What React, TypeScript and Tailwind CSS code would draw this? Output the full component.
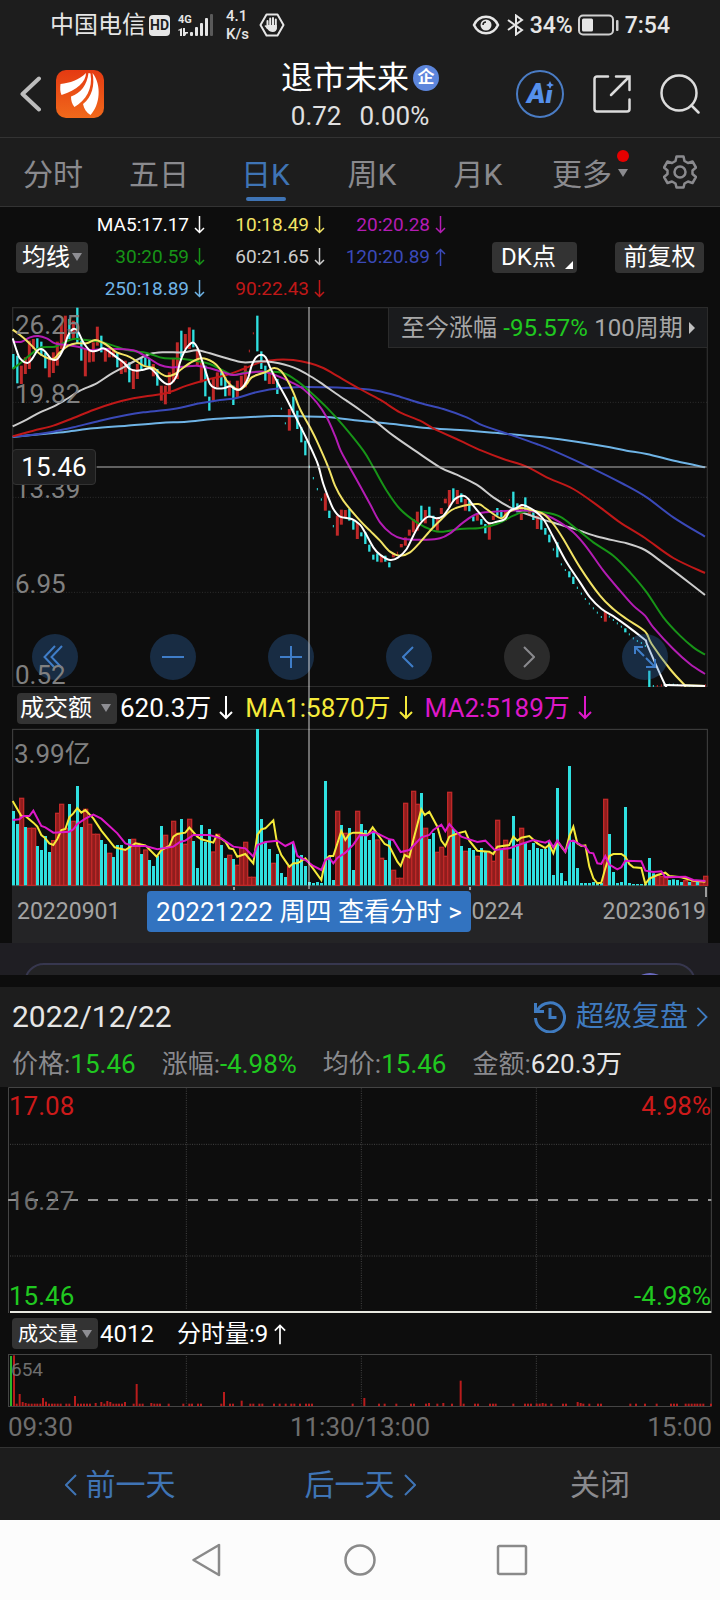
import React, { useState } from "react";

const UP = "#c02828";
const DOWN = "#2fe0e0";

// Chart units are thirds of a pixel, one bar every 12 units.
const FIRST_BAR = 40;
const BAR_STEP = 12;

type Bar = { x: number; down: boolean; top: number; bottom: number };
type Point = [number, number];

// "c" is a falling day, "r" a rising one
const parseBars = (data: string, floor = 0): Bar[] =>
  data
    .trim()
    .split(/\s+/)
    .map((item, i) => {
      const [top, bottom] = item.slice(1).split("-").map(Number);
      return {
        x: FIRST_BAR + i * BAR_STEP,
        down: item[0] === "c",
        top,
        bottom: bottom ?? floor,
      };
    });

const parsePoints = (data: string): Point[] =>
  data
    .trim()
    .split(/\s+/)
    .map((p) => p.split(",").map(Number) as Point);

const smoothPath = (data: string) => {
  const p = parsePoints(data);
  let d = `M${p[0][0]} ${p[0][1]}`;
  for (let i = 0; i < p.length - 1; i++) {
    const a = p[i - 1] ?? p[i];
    const b = p[i];
    const c = p[i + 1];
    const e = p[i + 2] ?? c;
    d += `C${b[0] + (c[0] - a[0]) / 6} ${b[1] + (c[1] - a[1]) / 6} ${c[0] - (e[0] - b[0]) / 6} ${c[1] - (e[1] - b[1]) / 6} ${c[0]} ${c[1]}`;
  }
  return d;
};

const candles = parseBars(`
c445-490 c450-533 r480-535 r455-505 r405-490 r400-430 c398-435 c408-450 c440-488 r455-515
r440-502 r408-480 r355-430 r330-415 c340-400 r345-400 c306-412 c405-465 r430-512 r430-470
r410-468 r363-420 c390-440 r432-468 r430-455 r432-455 c440-485 r462-505 r465-500 c470-530
r490-550 r475-520 c455-490 c455-480 c460-490 r475-512 c490-540 r540-585 r540-596 r500-565
r460-530 r410-520 c375-455 r385-430 r365-430 c372-425 r430-480 r465-530 c480-572 c573-615
r520-585 r500-545 c495-540 c515-572 r525-570 c540-598 r525-575 r510-545 r480-545 r432-440
r380-386 c330-437 c437-490 c480-525 r495-535 r500-535 c520-565 c606-612 c650-656 r610-675
c573-620 c615-670 c665-710 c705-749 c780-787 c814-821 c847-854 c878-885 r863-915 c915-937
c958-965 r930-990 r912-957 r913-935 c910-945 c945-972 r950-1000 c980-992 c980-1015 c1017-1038
c1047-1062 c1043-1068 r1050-1070 c1050-1068 c1070-1085 r1043-1055 r1038-1045 r1015-1025 r995-1020 r972-990
r940-980 r918-975 c900-945 r913-953 c903-935 c930-965 r940-975 r907-925 r879-893 r853-905
c848-885 r853-895 c863-890 r880-915 c885-917 c932-947 r925-945 c940-957 c955-983 r953-1002
r930-943 c907-930 c913-935 r915-945 r880-886 c858-915 c893-920 r900-943 c875-915 r907-930
c920-943 r930-970 c940-972 c967-987 c987-1010 c1028-1035 c1010-1055 c1073-1079 c1090-1096 c1097-1115
c1113-1135 c1143-1150 c1161-1167 c1177-1183 c1191-1197 c1205-1211 c1218-1224 c1231-1237 r1217-1248 c1230-1236
c1240-1246 c1250-1256 c1260-1266 c1268-1280 c1283-1289 c1295-1301 c1303-1309 c1309-1315 c1318-1324 c1395-1447
c1438-1444 r1438-1445 r1436-1443 c1434-1440 c1434-1440 c1434-1440 c1435-1441 r1437-1443 c1437-1443 c1437-1443
c1438-1444 r1438-1444 c1438-1444 r1436-1443`);

const volumes = parseBars(
  `
c273 c312 r235 c321 r325 r325 c378 c390 c348 c396 r362 r280 r253 r325 c252 r304 c198 c321 r268 r313
r343 r343 c360 c372 r400 c411 c375 c375 r388 c357 r358 r370 c402 r390 c420 c438 c408 c318 r346 r378
r304 r340 c297 r373 r298 c363 c444 c315 c366 c327 r396 r343 c375 c414 r406 c417 r436 r385 r367 r472
r472 c27 c297 c366 c387 r430 c402 c459 c471 r440 c372 c417 c405 c438 c486 c489 c486 c489 c183 c408
c480 r274 c315 r340 c324 c450 r274 c312 c330 c360 c333 r360 r415 c420 c360 r451 r475 r475 r250 r400
r214 r253 c219 r325 c357 c339 r397 r382 r409 r217 c327 r340 c378 r394 c384 c390 r409 c384 c396 r400
r424 r301 c387 r361 r418 c288 c372 r325 c366 c390 c369 c384 c387 c387 c366 c465 c204 c459 c483 c138
c360 c444 c489 c489 c489 c486 c489 c489 r238 c342 c456 c489 c486 c261 c489 c492 c492 c492 c492 c414
c460 r466 r470 r470 c480 c478 c480 c486 r482 c486 r484 c486 r484 r469`,
  496,
);

const priceLines = [
  {
    color: "#6fb4e6",
    d: smoothPath(
      "38,694 120,686 200,678 280,668 380,660 480,652 560,648 640,640 740,635 820,631 900,632 980,634 1080,645 1180,655 1280,667 1380,673 1480,681 1630,695 1730,708 1830,725 1880,735 1940,745 2030,767 2115,785",
    ),
  },
  {
    color: "#3a49b8",
    d: smoothPath(
      "38,693 100,687 160,678 220,665 300,645 380,628 430,620 520,610 600,593 660,583 710,577 760,562 820,550 900,544 980,545 1080,549 1130,555 1190,570 1260,592 1330,610 1400,635 1450,660 1530,687 1610,715 1660,735 1770,785 1870,835 1940,875 2020,935 2115,993",
    ),
  },
  {
    color: "#c01818",
    d: smoothPath(
      "38,692 100,675 160,660 220,637 280,613 340,593 400,578 450,570 500,562 560,540 620,522 680,508 730,490 780,470 830,462 880,463 930,473 970,487 1010,510 1080,550 1140,582 1200,620 1260,645 1300,668 1380,705 1445,735 1510,760 1580,783 1640,815 1720,850 1800,905 1860,950 1935,997 2020,1057 2115,1102",
    ),
  },
  {
    color: "#cccccc",
    d: smoothPath(
      "38,662 80,642 120,620 160,603 200,580 240,555 290,533 330,507 370,485 410,463 450,445 490,440 550,440 590,434 630,443 680,458 730,470 780,467 820,470 880,485 920,505 960,530 1010,565 1080,613 1130,650 1180,690 1245,735 1320,785 1370,807 1430,837 1480,875 1530,905 1580,925 1630,942 1680,957 1730,972 1800,995 1880,1013 1935,1033 1980,1065 2040,1110 2115,1168",
    ),
  },
  {
    color: "#179417",
    d: smoothPath(
      "38,490 70,465 100,440 125,425 165,423 190,412 220,400 250,402 300,408 340,420 380,433 430,440 460,448 490,457 550,460 590,466 630,475 670,495 700,508 740,500 800,498 850,502 890,525 930,558 980,605 1030,660 1090,735 1120,785 1160,855 1200,910 1250,950 1300,975 1330,978 1380,970 1440,967 1490,955 1540,930 1580,917 1630,920 1680,933 1730,970 1780,1010 1840,1050 1890,1100 1940,1160 1990,1235 2040,1290 2080,1325 2115,1347",
    ),
  },
  {
    color: "#b41cb4",
    d: smoothPath(
      "38,408 65,408 90,395 115,391 140,398 165,413 200,418 240,425 270,433 310,430 350,430 400,434 425,445 450,460 480,478 510,485 550,483 590,480 630,488 670,500 700,508 740,502 790,498 830,510 870,528 910,550 950,590 980,635 1005,690 1022,735 1048,783 1080,840 1110,895 1140,950 1175,985 1210,1000 1280,1002 1320,998 1350,983 1390,950 1430,925 1480,918 1530,915 1590,915 1630,925 1680,950 1720,980 1760,1025 1810,1095 1860,1155 1900,1200 1935,1230 1960,1265 2020,1330 2070,1375 2115,1405",
    ),
  },
  {
    color: "#f2e365",
    d: smoothPath(
      "38,372 60,388 80,405 100,425 120,445 150,460 165,457 180,440 205,420 230,413 260,413 285,403 310,412 330,425 350,440 380,450 400,460 430,480 460,487 480,502 500,512 525,505 545,490 570,472 605,458 640,470 660,490 680,525 700,545 720,552 740,535 755,515 780,505 800,498 822,487 842,495 860,520 880,560 900,610 930,665 950,705 985,785 1005,840 1030,885 1080,945 1110,975 1140,1005 1170,1038 1200,1050 1230,1040 1260,1010 1295,970 1325,940 1355,913 1390,900 1435,895 1455,907 1480,925 1505,938 1525,920 1560,907 1590,912 1630,925 1660,955 1690,1000 1740,1085 1800,1170 1840,1210 1880,1240 1935,1277 1955,1315 2010,1390 2053,1437 2058,1439 2115,1441",
    ),
  },
  {
    color: "#ffffff",
    d: smoothPath(
      "38,398 50,435 60,458 82,472 96,460 112,435 124,430 136,438 154,460 172,460 190,430 204,390 220,370 234,378 250,410 270,435 290,435 310,428 330,440 350,455 370,470 390,490 410,495 430,492 450,488 465,500 480,520 500,535 515,532 530,510 540,470 552,440 565,420 580,411 594,430 606,465 618,500 630,535 645,547 670,548 690,542 705,550 718,552 732,540 745,515 755,480 768,455 784,447 797,455 810,485 830,525 860,580 885,630 904,668 920,700 943,750 955,780 970,835 985,875 1000,910 1020,933 1055,940 1080,957 1095,980 1120,1025 1140,1047 1170,1063 1195,1055 1220,1030 1240,990 1260,955 1285,933 1310,938 1330,930 1345,910 1365,880 1390,870 1405,880 1420,900 1445,930 1465,952 1490,948 1515,940 1530,915 1550,907 1565,898 1580,902 1600,913 1630,940 1660,995 1700,1070 1740,1130 1770,1175 1805,1210 1845,1235 1880,1260 1932,1300 1938,1306 1945,1325 1994,1435 1998,1438 2003,1438 2115,1441",
    ),
  },
];

const volumeLines = [
  {
    color: "#f5ea3a",
    points:
      "38,243 64,288 76,288 100,308 112,320 124,345 136,355 148,370 160,375 172,357 184,330 196,327 208,292 220,280 232,264 244,278 256,270 280,295 304,332 328,362 344,382 376,390 406,370 436,376 470,410 484,390 508,378 520,350 532,342 556,338 568,323 592,350 604,358 640,368 650,346 676,365 688,385 700,388 712,410 736,402 760,430 772,345 784,328 796,325 820,301 832,375 844,405 868,440 880,430 892,430 916,415 928,430 964,480 976,420 988,408 1000,408 1024,333 1036,360 1048,342 1060,338 1080,338 1102,345 1118,322 1132,342 1154,372 1168,378 1192,425 1202,438 1214,405 1228,412 1240,360 1264,268 1274,285 1288,275 1312,320 1324,362 1336,378 1348,350 1372,340 1396,334 1408,362 1432,392 1468,395 1480,402 1492,380 1528,375 1540,350 1552,362 1564,353 1588,348 1612,370 1636,384 1648,374 1660,400 1672,364 1696,395 1708,348 1720,320 1732,370 1744,378 1756,376 1768,440 1780,475 1792,490 1804,488 1816,445 1828,408 1840,402 1864,402 1876,410 1888,432 1900,442 1924,444 1936,492 1948,476 1972,465 1996,458 2008,468 2044,472 2080,482 2116,485",
  },
  {
    color: "#dd18c8",
    points:
      "38,300 58,298 70,288 88,288 100,272 124,318 136,322 160,338 208,335 220,328 232,312 256,296 280,284 304,296 352,340 376,370 400,378 436,378 472,388 520,380 540,366 556,362 580,345 628,345 664,355 700,380 736,385 760,410 772,375 796,366 832,362 856,378 880,366 892,408 916,420 940,438 964,450 976,420 988,414 1000,430 1012,414 1036,398 1060,374 1080,345 1102,346 1120,334 1168,358 1180,360 1202,396 1228,390 1264,352 1288,345 1300,330 1324,314 1336,334 1348,312 1360,326 1384,350 1408,358 1432,366 1456,362 1484,390 1528,385 1564,372 1600,360 1636,368 1648,362 1660,382 1672,362 1696,396 1708,364 1720,362 1744,376 1756,380 1768,398 1780,400 1792,430 1804,432 1816,408 1828,434 1852,448 1864,442 1876,422 1924,424 1936,452 1960,456 1984,454 1996,472 2056,470 2080,480 2116,483",
  },
];

// One-lot minutes sit at 461, the rest carry their own top
const minuteVolumes = parsePoints(`
42,316 50,461 59,432 68,456 77,459 86,461 95,461 104,461 112,461 121,461 129,444 138,455 147,461 156,461 164,461
173,461 182,461 199,461 208,461 225,438 234,461 243,461 252,461 261,461 270,461 287,459 304,456 313,461 322,453
331,456 340,461 349,461 357,461 366,461 375,456 401,461 410,402 419,461 428,461 454,459 463,461 472,461 480,461
506,461 550,461 568,461 576,461 594,461 603,461 664,461 672,426 690,461 699,461 725,452 751,461 760,461 778,461
787,461 822,461 839,461 857,461 874,461 883,461 900,461 918,461 927,461 936,461 1058,461 1093,444 1137,461
1154,461 1189,461 1233,461 1242,461 1278,461 1287,459 1312,461 1330,459 1356,461 1382,392 1391,461 1425,461
1434,461 1470,461 1479,461 1487,461 1540,461 1575,461 1584,461 1593,461 1610,461 1619,461 1628,459 1637,461
1654,461 1689,461 1698,461 1733,456 1742,459 1750,461 1768,461 1794,461 1803,461 1891,461 1908,461 1935,461
1970,461 2013,461 2022,461 2031,461 2057,461 2066,461 2075,461 2084,461 2092,461 2101,461 2110,461 2133,461`);

const averages = [
  { label: "MA5:17.17", color: "text-white" },
  { label: "10:18.49", color: "text-[#f2e365]" },
  { label: "20:20.28", color: "text-[#b41cb4]" },
  { label: "30:20.59", color: "text-[#179417]" },
  { label: "60:21.65", color: "text-[#cccccc]" },
  { label: "120:20.89", color: "text-[#3a49b8]", up: true },
  { label: "250:18.89", color: "text-[#6fb4e6]" },
  { label: "90:22.43", color: "text-[#c01818]" },
];

const Arrow: React.FC<{ up?: boolean; className?: string }> = ({
  up,
  className = "h-[18px] w-[11px]",
}) => (
  <svg
    viewBox="0 0 14 24"
    className={`shrink-0 ${className} ${up ? "rotate-180" : ""}`}
    fill="none"
    stroke="currentColor"
    strokeWidth="2"
  >
    <path d="M7 0v22M1 16l6 6 6-6" />
  </svg>
);

const Chevron: React.FC<{ left?: boolean; className?: string }> = ({
  left,
  className = "h-[22px] w-3",
}) => (
  <svg
    viewBox="0 0 12 22"
    className={`shrink-0 ${className}`}
    fill="none"
    stroke="currentColor"
    strokeWidth="2"
  >
    <path d={left ? "M11 1L1 11l10 10" : "M1 1l10 10L1 21"} />
  </svg>
);

interface DropDownProps {
  label: string;
  options: string[];
  className: string;
}

const DropDown: React.FC<DropDownProps> = ({ label, options, className }) => (
  <div className="relative flex shrink-0 items-center">
    <select
      aria-label={label}
      className={`h-[31px] appearance-none rounded bg-[#333333] leading-none text-white ${className}`}
    >
      {options.map((o) => (
        <option key={o}>{o}</option>
      ))}
    </select>
    <svg
      viewBox="0 0 10 8"
      className="pointer-events-none absolute right-[6px] h-2 w-[10px]"
    >
      <path d="M0 0h10L5 8z" fill="#8e8e93" />
    </svg>
  </div>
);

const StatusBar = () => (
  <div className="flex h-[50px] items-center justify-between px-[50px] font-medium text-[#e6e6e6]">
    <div className="flex items-center">
      <span className="text-[24px] font-normal leading-none">中国电信</span>
      <span className="ml-[3px] flex h-[21px] w-[21px] items-center justify-center rounded-[4px] bg-[#e6e6e6] text-[14px] font-bold leading-none text-[#1d1d1d]">
        HD
      </span>
      <div className="relative ml-2 h-[22px] w-9">
        <span className="absolute left-0 top-0 text-[11px] font-bold leading-none">
          4G
        </span>
        <svg viewBox="0 0 36 22" className="h-full w-full" fill="#e6e6e6">
          <path d="M0 16l4-2v8H2v-5.500H0zM5 14h2v4l3 0v1.500H8.500L7 22H5z" />
          <rect x="12" y="18" width="3" height="4" rx="1" />
          <rect x="17" y="13" width="3" height="9" rx="1" />
          <rect x="22" y="9" width="3" height="13" rx="1" />
          <rect x="27" y="4" width="3" height="18" rx="1" />
          <rect x="32" y="0" width="3" height="22" rx="1" fill="#5a5a5a" />
        </svg>
      </div>
      <span className="ml-3 w-6 text-[15px] leading-[18px]">
        4.1
        <br />
        K/s
      </span>
      <svg viewBox="0 0 26 24" className="ml-[9px] h-6 w-[26px]">
        <path
          d="M7.500 1.500h11L24.500 12l-6 10.500h-11L1.500 12z"
          fill="none"
          stroke="#e6e6e6"
          strokeWidth="2"
          strokeLinejoin="round"
        />
        <path
          d="M8.500 8v7M11.200 5.500v8M14 5v8M16.800 6.500v9"
          stroke="#e6e6e6"
          strokeWidth="2"
          strokeLinecap="round"
        />
        <path
          d="M7.500 12h10.300v3c0 2.500-1.500 4-4 4s-4-1-5-2.500L5.500 13c.5-1.200 1.500-.8 2 0z"
          fill="#e6e6e6"
        />
      </svg>
    </div>
    <div className="flex items-center">
      <svg viewBox="0 0 28 20" className="h-5 w-7">
        <path
          d="M2 10C7-1 21-1 26 10 21 21 7 21 2 10z"
          fill="none"
          stroke="#e6e6e6"
          strokeWidth="2.500"
        />
        <circle cx="14" cy="10" r="5.500" fill="#e6e6e6" />
        <path
          d="M11 10a3 3 0 013-3"
          fill="none"
          stroke="#1d1d1d"
          strokeWidth="1.500"
        />
      </svg>
      <svg
        viewBox="0 0 18 22"
        className="ml-[7px] h-[22px] w-[18px]"
        fill="none"
        stroke="#e6e6e6"
        strokeWidth="2"
      >
        <path d="M1 6l14 10-6 4.500v-19L15 6 1 16" />
      </svg>
      <span className="ml-[5px] text-[23px] leading-none">34%</span>
      <svg viewBox="0 0 42 22" className="ml-[5px] h-[22px] w-[42px]">
        <rect
          x="1"
          y="1.500"
          width="34"
          height="19"
          rx="4"
          fill="none"
          stroke="#d0d0d0"
          strokeWidth="2"
        />
        <rect x="4" y="4.500" width="11" height="13" rx="1.500" fill="#e6e6e6" />
        <rect x="38" y="6" width="2.500" height="11" rx="1" fill="#d0d0d0" />
      </svg>
      <span className="ml-[5px] text-[23px] leading-none">7:54</span>
    </div>
  </div>
);

const Header = () => (
  <header className="grid h-[88px] grid-cols-[1fr_auto_1fr] items-center border-b border-[#333333] px-5">
    <div className="flex items-center gap-[15px]">
      <button aria-label="返回" className="text-[#bdbdbd]">
        <svg
          viewBox="0 0 21 36"
          className="h-9 w-[21px]"
          fill="none"
          stroke="currentColor"
          strokeWidth="4"
          strokeLinecap="round"
          strokeLinejoin="round"
        >
          <path d="M19 2.500L2.500 18 19 33.500" />
        </svg>
      </button>
      <svg viewBox="0 0 48 48" className="h-12 w-12">
        <defs>
          <linearGradient id="logo" x1="0" y1="0" x2="0" y2="1">
            <stop offset="0" stopColor="#e53a12" />
            <stop offset="1" stopColor="#f0691b" />
          </linearGradient>
        </defs>
        <rect width="48" height="48" rx="10" fill="url(#logo)" />
        <g fill="#fff">
          <path d="M4.500 14C14 13 23 10 30 3c0 9-9 17-24.500 22-1.500-3-1.500-7-1-11z" />
          <path d="M32.500 3C31 15 25 23 15 26.500c0 4 1 7.500 3.500 10.500C30 30 37 19 34.500 3.500z" />
          <path d="M36.500 3c2.500 12-.5 24-9.500 31 1 5 3.500 8.500 7.500 11C44 35 46 15 36.500 3z" />
        </g>
      </svg>
    </div>
    <div className="flex flex-col items-center pt-1">
      <h1 className="flex items-center gap-1 text-[32px] font-normal leading-10 text-white">
        退市未来
        <span className="flex h-[26px] w-[26px] items-center justify-center rounded-full bg-[#5d86dc] text-[17px] font-bold leading-none">
          企
        </span>
      </h1>
      <div className="flex gap-[18px] text-[26px] leading-9 text-[#e0e0e0]">
        <span>0.72</span>
        <span>0.00%</span>
      </div>
    </div>
    <div className="flex items-center justify-end gap-[29px] text-[#dcdcdc]">
      <button
        aria-label="Ai"
        className="relative flex h-12 w-12 items-center justify-center rounded-full border-2 border-[#4a7cc4] text-[28px] font-black italic leading-none text-[#5590ec]"
      >
        Ai
        <svg
          viewBox="0 0 10 10"
          className="absolute right-[7px] top-[8px] h-[10px] w-[10px]"
        >
          <rect width="10" height="10" fill="#1d1d1d" />
          <path d="M5 1l1.300 2.700L9 5 6.300 6.300 5 9 3.700 6.300 1 5l2.700-1.300z" fill="#5590ec" />
        </svg>
      </button>
      <button aria-label="分享">
        <svg
          viewBox="0 0 38 38"
          className="h-[38px] w-[38px]"
          fill="none"
          stroke="currentColor"
          strokeWidth="2.500"
          strokeLinecap="round"
        >
          <path d="M15 1.500H4A2.500 2.500 0 001.500 4v30A2.500 2.500 0 004 36.500h30a2.500 2.500 0 002.500-2.500V24.500M23 1.500h13.500V15M36 2L18 20" />
        </svg>
      </button>
      <button aria-label="搜索">
        <svg
          viewBox="0 0 40 40"
          className="h-10 w-10"
          fill="none"
          stroke="currentColor"
          strokeWidth="2.500"
          strokeLinecap="round"
        >
          <circle cx="19" cy="19" r="17.500" />
          <path d="M31.500 31.500l7 7" />
        </svg>
      </button>
    </div>
  </header>
);

const tabs = ["分时", "五日", "日K", "周K", "月K"];

const Tabs = () => {
  const [active, setActive] = useState("日K");

  return (
    <nav className="grid h-[69px] grid-cols-[106fr_106fr_107fr_106fr_106fr_118fr_71fr] border-b border-[#333333] text-[30px] leading-none text-[#8a8a8e]">
      {tabs.map((tab) => (
        <button
          key={tab}
          onClick={() => setActive(tab)}
          className={`relative flex items-center justify-center pt-[5px] ${
            tab === active ? "text-[#3f74b5]" : ""
          }`}
        >
          {tab}
          {tab === active && (
            <span className="absolute bottom-[5px] h-1 w-10 rounded-full bg-[#3f74b5]" />
          )}
        </button>
      ))}
      <button className="flex items-center justify-center gap-[6px] pt-[5px]">
        更多
        <span className="relative">
          <svg viewBox="0 0 10 8" className="mb-1 h-2 w-[10px]">
            <path d="M0 0h10L5 8z" fill="#8a8a8e" />
          </svg>
          <span className="absolute -left-px -top-[19px] h-3 w-3 rounded-full bg-[#e60000]" />
        </span>
      </button>
      <button
        aria-label="设置"
        className="flex items-center justify-center pr-[10px]"
      >
        <svg
          viewBox="0 0 34 34"
          className="h-[34px] w-[34px]"
          fill="none"
          stroke="currentColor"
          strokeWidth="2.500"
          strokeLinejoin="round"
        >
          <path d="M13.500 1.500h7l1 4.500 3.500 2 4.500-1.500 3.500 6-3.500 3v3.500l3.500 3-3.500 6L25 26.500l-3.500 2-1 4h-7l-1-4-3.500-2-4.500 1.500-3.500-6 3.500-3V15.500L1 12.500l3.500-6L9 8l3.500-2z" />
          <circle cx="17" cy="17" r="5.500" />
        </svg>
      </button>
    </nav>
  );
};

const AverageBar = () => (
  <div className="flex h-[100px] items-center px-4">
    <DropDown
      label="指标"
      options={["均线", "BOLL"]}
      className="w-[72px] pl-[6px] text-[24px]"
    />
    <div className="grid grid-cols-[117px_120px_121px] text-[19px] leading-8">
      {averages.map((a) => (
        <span
          key={a.label}
          className={`flex items-center justify-end gap-[5px] ${a.color}`}
        >
          {a.label}
          <Arrow up={a.up} />
        </span>
      ))}
    </div>
    <div className="ml-auto flex gap-[38px] text-[24px] leading-none text-white">
      <button className="relative h-[31px] w-[85px] rounded bg-[#333333] pr-3">
        DK点
        <svg viewBox="0 0 8 8" className="absolute bottom-1 right-1 h-2 w-2">
          <path d="M8 0v8H0z" fill="#fff" />
        </svg>
      </button>
      <button className="h-[31px] w-[89px] rounded bg-[#333333]">前复权</button>
    </div>
  </div>
);

const toolButton =
  "flex h-[46px] w-[46px] items-center justify-center rounded-full";

const PriceChart = () => (
  <div className="relative h-[380px]">
    <svg
      viewBox="36 304 2088 1140"
      preserveAspectRatio="none"
      className="block h-full w-full"
      fill="none"
    >
      <rect x="38" y="306" width="2084" height="1137" stroke="#2b2b2b" strokeWidth="4" />
      <path
        d="M38 590H2122M38 875H2122M38 1160H2122"
        stroke="#2e2e2e"
        strokeWidth="3"
        strokeDasharray="3 5"
      />
      {candles.map((c) => {
        const width = c.bottom - c.top < 9 ? 3 : c.down ? 7 : 9;
        return (
          <rect
            key={c.x}
            x={c.x - width / 2}
            y={c.top}
            width={width}
            height={c.bottom - c.top}
            fill={c.down ? DOWN : UP}
          />
        );
      })}
      {priceLines.map((l) => (
        <path key={l.color} d={l.d} stroke={l.color} strokeWidth="6" />
      ))}
      <path d="M290 784H2120" stroke="#b4b4b4" strokeWidth="3" />
    </svg>

    <div className="absolute left-5 right-10 top-[327px] flex justify-between text-[#3f7dc8]">
      <button aria-label="最早" className={`${toolButton} bg-[#3273c0]/30`}>
        <svg viewBox="0 0 20 24" className="mr-1 h-6 w-5" fill="none" stroke="currentColor" strokeWidth="2">
          <path d="M12 1L1.500 12 12 23M19 1L8.500 12 19 23" />
        </svg>
      </button>
      <button aria-label="缩小" className={`${toolButton} bg-[#3273c0]/30`}>
        <svg viewBox="0 0 22 22" className="h-[22px] w-[22px]" stroke="currentColor" strokeWidth="2">
          <path d="M0 11h22" />
        </svg>
      </button>
      <button aria-label="放大" className={`${toolButton} bg-[#3273c0]/30`}>
        <svg viewBox="0 0 22 22" className="h-[22px] w-[22px]" stroke="currentColor" strokeWidth="2">
          <path d="M0 11h22M11 0v22" />
        </svg>
      </button>
      <button aria-label="左移" className={`${toolButton} bg-[#3273c0]/30`}>
        <Chevron left className="mr-[3px] h-[22px] w-3" />
      </button>
      <button
        aria-label="右移"
        className={`${toolButton} bg-[#888888]/25 text-[#8a8a8e]`}
      >
        <Chevron className="ml-[3px] h-[22px] w-3" />
      </button>
      <button aria-label="全屏" className={`${toolButton} bg-[#3273c0]/30`}>
        <svg viewBox="0 0 24 24" className="h-6 w-6" fill="none" stroke="currentColor" strokeWidth="2">
          <path d="M2 9V2h8M2 2l9 9M22 14v8h-9M22 22l-9-9" />
        </svg>
      </button>
    </div>

    <div className="pointer-events-none text-[26px] leading-none text-[#808080]">
      <span className="absolute left-[3px] top-[5px]">26.25</span>
      <span className="absolute left-[3px] top-[74px]">19.82</span>
      <span className="absolute left-[3px] top-[169px]">13.39</span>
      <span className="absolute left-[3px] top-[264px]">6.95</span>
      <span className="absolute left-[3px] top-[355px]">0.52</span>
    </div>
    <span className="absolute left-0 top-[142px] flex h-9 w-[84px] items-center justify-center rounded border border-[#333333] bg-[#1d1d1d] text-[26px] leading-none text-white">
      15.46
    </span>
    <button className="absolute right-0 top-0 flex h-[41px] w-[320px] items-center justify-between border border-[#2b2b2b] bg-[#1a1b1d] pl-3 pr-3 text-[24px] leading-none text-[#a8a8a8]">
      <span>至今涨幅</span>
      <span className="text-[#20c820]">-95.57%</span>
      <span>100周期</span>
      <svg viewBox="0 0 6 12" className="h-3 w-[6px]">
        <path d="M0 0l6 6-6 6z" fill="#c0c0c0" />
      </svg>
    </button>
  </div>
);

const TurnoverLegend = () => (
  <div className="flex h-[42px] items-center pl-[5px] text-[26px] leading-none">
    <DropDown
      label="副图指标"
      options={["成交额", "MACD", "KDJ"]}
      className="w-[100px] pl-[3px] text-[24px]"
    />
    <span className="ml-[3px] flex items-center gap-2 text-white">
      620.3万
      <Arrow className="h-6 w-[14px]" />
    </span>
    <span className="ml-3 flex items-center gap-2 text-[#f5ea3a]">
      MA1:5870万
      <Arrow className="h-6 w-[14px]" />
    </span>
    <span className="ml-3 flex items-center gap-2 text-[#dd18c8]">
      MA2:5189万
      <Arrow className="h-6 w-[14px]" />
    </span>
  </div>
);

const VolumeChart = () => (
  <div className="relative h-[157px]">
    <svg
      viewBox="36 27 2088 471"
      preserveAspectRatio="none"
      className="relative z-10 block h-full w-full overflow-visible"
      fill="none"
    >
      <rect x="38" y="28" width="2084" height="469" stroke="#444444" strokeWidth="3" />
      {volumes.map((v) =>
        v.down ? (
          <rect
            key={v.x}
            x={v.x - 4}
            y={v.top}
            width="9"
            height={v.bottom - v.top}
            fill={DOWN}
          />
        ) : (
          <rect
            key={v.x}
            x={v.x - 5}
            y={v.top}
            width="12"
            height={v.bottom - v.top}
            fill="#8f1d1d"
            stroke={UP}
            strokeWidth="4"
          />
        ),
      )}
      {volumeLines.map((l) => (
        <polyline key={l.color} points={l.points} stroke={l.color} strokeWidth="6" />
      ))}
      <path d="M702 501v9M1410 501v9M2118 501v30" stroke="#b4b4b4" strokeWidth="5" />
    </svg>
    <span className="absolute left-[2px] top-3 text-[26px] leading-none text-[#808080]">
      3.99亿
    </span>
  </div>
);

const DateAxis = () => (
  <div className="relative flex h-[57px] items-start justify-between bg-[#242426] pl-[5px] pr-[2px] pt-[14px] text-[23px] leading-6 text-[#a4a4a4]">
    <span>20220901</span>
    <span className="ml-[220px]">20230224</span>
    <span>20230619</span>
    <button className="absolute left-[135px] top-[5px] h-[41px] w-[324px] whitespace-nowrap rounded bg-[#3273c0] text-[26px] leading-none text-white">
      20221222 周四 查看分时 &gt;
    </button>
  </div>
);

const DayPanel = () => (
  <section className="mt-3 bg-[#1d1d1d] px-3 pb-[6px]">
    <div className="flex h-[60px] items-center justify-between">
      <h2 className="text-[30px] leading-none text-[#e6e6e6]">2022/12/22</h2>
      <a
        href="#review"
        className="flex items-center text-[28px] leading-none text-[#3f7bc0]"
      >
        <svg
          viewBox="0 0 32 32"
          className="mr-[10px] h-8 w-8"
          fill="none"
          stroke="currentColor"
          strokeWidth="3"
        >
          <path d="M1.500 17A14.500 14.500 0 103.500 9" />
          <path d="M1.500 2v8.500h8.500" />
          <path d="M16 7v9.500h6.500" />
        </svg>
        超级复盘
        <Chevron className="ml-2 h-5 w-3" />
      </a>
    </div>
    <div className="flex h-[34px] items-center gap-[26px] text-[26px] leading-none text-[#8a8a8e]">
      <span>
        价格:<span className="text-[#20c820]">15.46</span>
      </span>
      <span>
        涨幅:<span className="text-[#20c820]">-4.98%</span>
      </span>
      <span>
        均价:<span className="text-[#20c820]">15.46</span>
      </span>
      <span>
        金额:<span className="text-[#e6e6e6]">620.3万</span>
      </span>
    </div>
  </section>
);

const MinuteChart = () => (
  <section className="px-2">
    <div className="relative h-[226px] text-[26px] leading-none">
      <svg
        viewBox="24 321 2112 678"
        preserveAspectRatio="none"
        className="block h-full w-full"
        fill="none"
      >
        <path d="M25.500 999V322.500H2134V999" stroke="#444444" strokeWidth="3" />
        <path
          d="M559 325V990M1084 325V990M1609 325V990M30 493H2132M30 828H2132"
          stroke="#444444"
          strokeWidth="3"
          strokeDasharray="3 4"
        />
        <path d="M24 660H2134" stroke="#949494" strokeWidth="6" strokeDasharray="30 30" />
        <path d="M30 996H2134" stroke="#e8e8e0" strokeWidth="6" />
      </svg>
      <span className="absolute left-px top-[6px] text-[#cc1a1a]">17.08</span>
      <span className="absolute right-px top-[6px] text-[#cc1a1a]">4.98%</span>
      <span className="absolute left-px top-[101px] text-[#6e6e6e]">16.27</span>
      <span className="absolute left-px top-[196px] text-[#20c820]">15.46</span>
      <span className="absolute right-px top-[196px] text-[#20c820]">-4.98%</span>
    </div>
    <div className="flex h-[41px] items-center pl-1 text-[24px] leading-none text-white">
      <DropDown
        label="分时指标"
        options={["成交量", "量比"]}
        className="w-[86px] pl-[6px] text-[20px]"
      />
      <span className="ml-[2px]">4012</span>
      <span className="ml-[23px] flex items-center gap-[6px]">
        分时量:9
        <Arrow up className="h-[22px] w-3" />
      </span>
    </div>
    <div className="relative h-[53px]">
      <svg
        viewBox="24 312 2112 159"
        preserveAspectRatio="none"
        className="block h-full w-full"
        fill="none"
      >
        <rect x="25.500" y="313.500" width="2108" height="156" stroke="#444444" strokeWidth="3" />
        <path
          d="M559 318V466M1084 318V466M1609 318V466"
          stroke="#444444"
          strokeWidth="3"
          strokeDasharray="3 4"
        />
        <rect x="30" y="318" width="6" height="150" fill="#2bb52b" />
        {minuteVolumes.map(([x, top]) => (
          <rect key={x} x={x - 3} y={top} width="6" height={468 - top} fill="#b81c1c" />
        ))}
      </svg>
      <span className="absolute left-[3px] top-[6px] text-[19px] leading-none text-[#6e6e6e]">
        654
      </span>
    </div>
    <div className="grid h-10 grid-cols-3 items-center text-[26px] leading-none text-[#6e6e6e]">
      <span>09:30</span>
      <span className="text-center">11:30/13:00</span>
      <span className="text-right">15:00</span>
    </div>
  </section>
);

const App: React.FC = () => (
  <div
    lang="zh-CN"
    className="min-h-screen bg-[#0d0d0d] font-['Roboto','Noto_Sans_CJK_SC',sans-serif]"
  >
    <div className="bg-[#1d1d1d]">
      <StatusBar />
      <Header />
      <Tabs />
    </div>

    <AverageBar />
    <main className="relative mx-3">
      <PriceChart />
      <TurnoverLegend />
      <VolumeChart />
      <div className="pointer-events-none absolute bottom-[-3px] left-[296px] top-0 z-20 w-[2px] bg-white/40" />
    </main>
    <div className="mx-3">
      <DateAxis />
    </div>

    <div className="h-8 overflow-hidden bg-[#1f1e23] px-6 pt-5">
      <div className="relative h-16 rounded-[20px] border-2 border-[#37374f] bg-[#232325]">
        <span className="absolute right-6 top-2 h-10 w-10 rounded-full bg-[#6a6ac0]" />
      </div>
    </div>

    <DayPanel />
    <MinuteChart />

    <div className="grid h-[73px] grid-cols-3 border-t border-[#333333] bg-[#1d1d1d] pt-px text-[30px] leading-none text-[#3f74b5]">
      <button className="flex items-center justify-center gap-[9px]">
        <Chevron left />
        前一天
      </button>
      <button className="flex items-center justify-center gap-[9px]">
        后一天
        <Chevron />
      </button>
      <button className="text-[#8a8a8e]">关闭</button>
    </div>

    <div className="flex h-20 items-center justify-center gap-[120px] bg-[#fcfcfc] text-[#8a8a8a]">
      <button aria-label="后退">
        <svg viewBox="0 0 32 34" className="h-[34px] w-8" fill="none" stroke="currentColor" strokeWidth="2.500" strokeLinejoin="round">
          <path d="M1.500 17L27 2v30z" />
        </svg>
      </button>
      <button aria-label="主页">
        <svg viewBox="0 0 32 32" className="h-8 w-8" fill="none" stroke="currentColor" strokeWidth="2.500">
          <circle cx="16" cy="16" r="14.500" />
        </svg>
      </button>
      <button aria-label="最近任务">
        <svg viewBox="0 0 32 32" className="h-8 w-8" fill="none" stroke="currentColor" strokeWidth="2.500">
          <rect x="2" y="2" width="28" height="28" rx="1.500" />
        </svg>
      </button>
    </div>
  </div>
);

export default App;
